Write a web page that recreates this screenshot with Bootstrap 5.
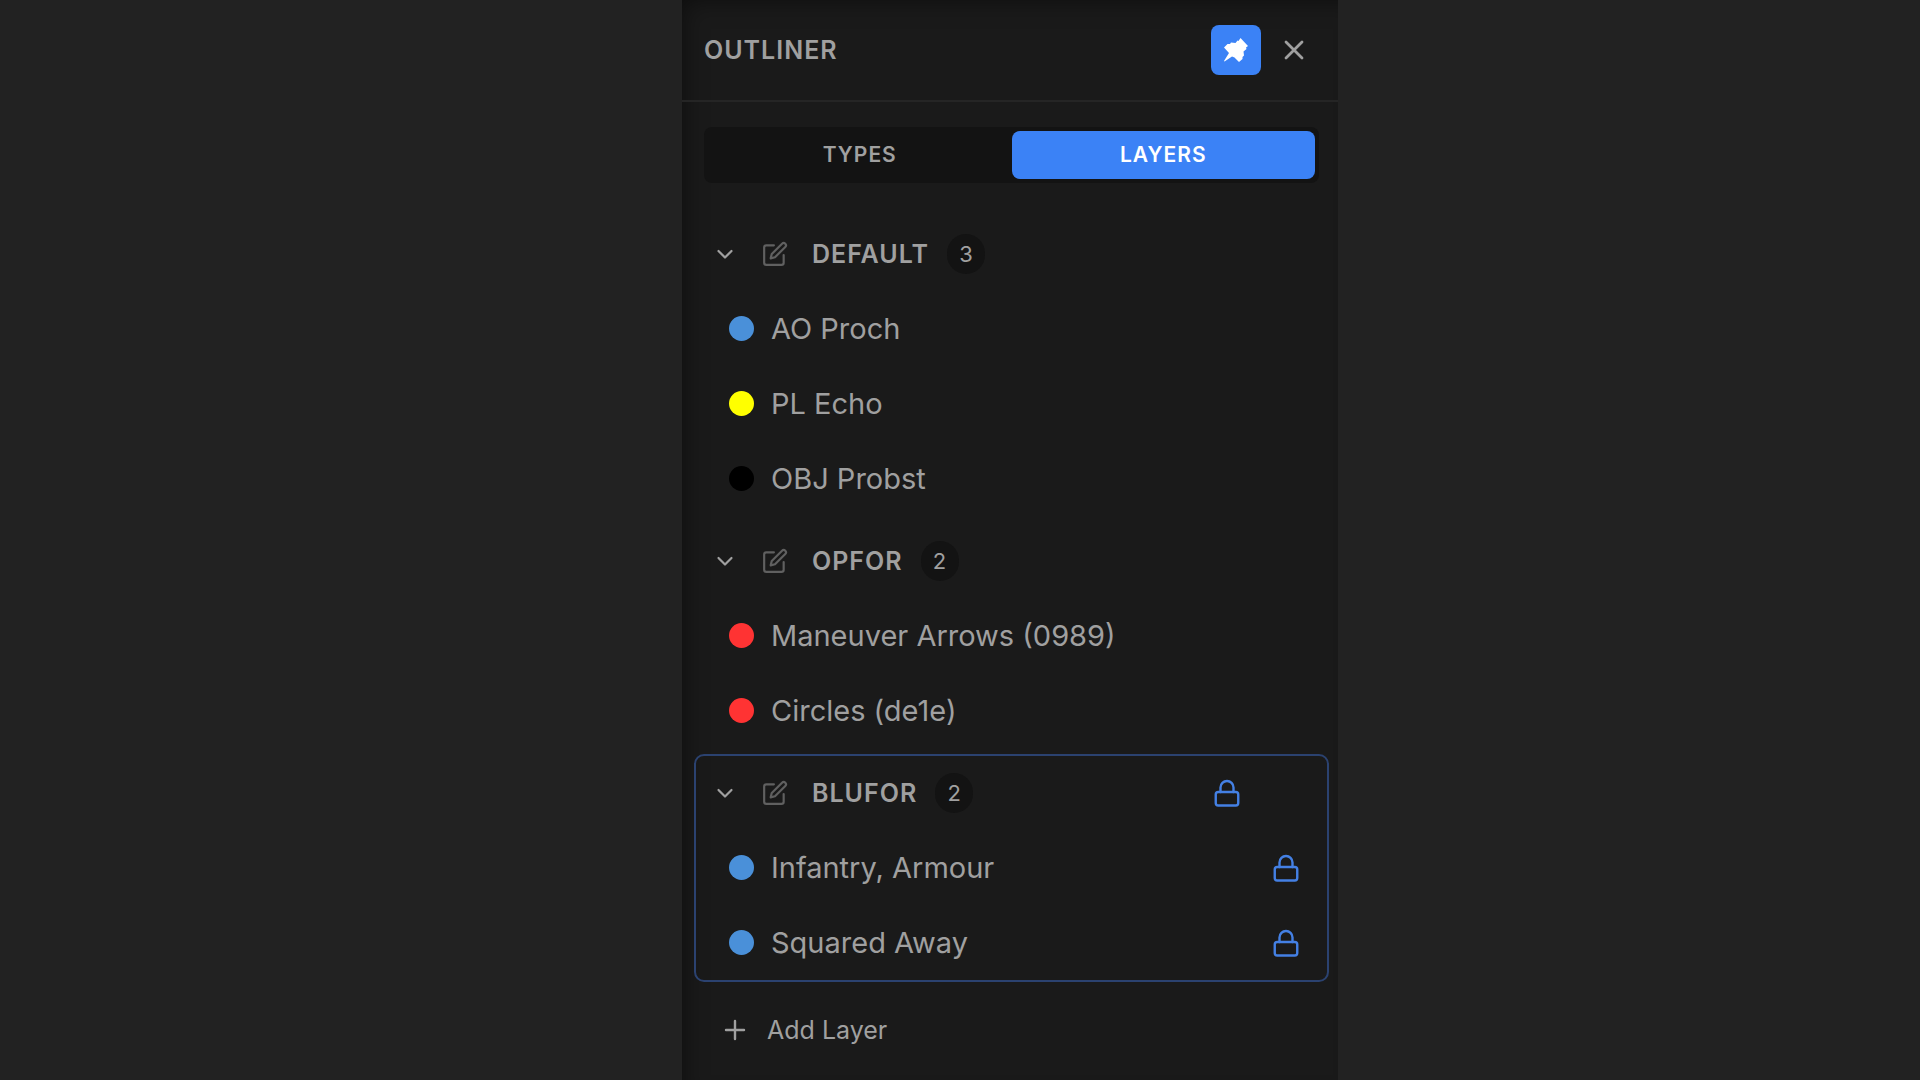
<!DOCTYPE html>
<html lang="en" data-bs-theme="dark">
<head>
<meta charset="utf-8">
<meta name="viewport" content="width=device-width, initial-scale=1">
<title>Outliner</title>
<link rel="stylesheet" href="https://cdn.jsdelivr.net/npm/bootstrap@5.3.0/dist/css/bootstrap.min.css">
<style>
  :root { --accent: #3b82f6; --panel: #1a1a1a; --well: #131313; --ink: #a0a0a0; }
  body { background: #222; color: var(--ink); font-family: Inter, "Liberation Sans", sans-serif; overflow-x: hidden; }
  .outliner {
    width: 656px; max-width: 100%; min-height: 100vh;
    margin-left: max(0px, calc(50% - 278px));
    background: var(--panel);
    box-shadow: inset 12px 12px 24px -12px rgba(0, 0, 0, .5);
  }
  .panel-head { padding: 25px 19px 25px 22px; border-bottom: 2px solid #252525; }
  .panel-title { font-size: 25px; line-height: 32px; font-weight: 600; letter-spacing: 1px; color: var(--ink); }
  .icon-btn { width: 50px; height: 50px; padding: 0; border: 0; border-radius: 8px; color: var(--ink); }
  .icon-btn.pinned { background: var(--accent); color: #fff; }
  .tab-wrap { padding: 25px 19px 32px 22px; }
  .tab-well { background: var(--well); border-radius: 8px; padding: 4px; }
  .tab-well .btn { height: 48px; padding: 0; border: 0; border-radius: 8px; font-size: 21px; line-height: 24px; font-weight: 600; letter-spacing: 1px; color: var(--ink); }
  .tab-well .btn.active { background: var(--accent); color: #fff; }
  .groups { padding: 0 9px 0 12px; }
  .layer-group { border: 2px solid transparent; border-radius: 10px; margin-bottom: 4px; }
  .layer-group.selected { border-color: #2b4270; }
  .group-head { height: 74px; padding-left: 16px; padding-right: 86px; }
  .plain-btn { padding: 0; border: 0; background: none; color: inherit; display: flex; align-items: center; justify-content: center; }
  .toggle { width: 25px; height: 40px; }
  .edit { width: 32px; height: 40px; margin-left: 22px; color: #606060; }
  .lock { width: 28px; height: 40px; color: #4480e4; }
  .group-name { font-size: 25px; line-height: 32px; font-weight: 600; letter-spacing: 1px; margin: 0 0 0 21px; color: var(--ink); }
  .count { min-width: 38px; height: 40px; margin-left: 18px; border-radius: 20px; background: var(--well); font-size: 22px; line-height: 40px; text-align: center; }
  .layer-item { height: 75px; padding-left: 33px; padding-right: 27px; font-size: 29px; line-height: 36px; }
  .dot { width: 25px; height: 25px; border-radius: 50%; margin-right: 17px; flex: none; }
  .dot-blue { background: #4a90d9; }
  .dot-yellow { background: #ff0; }
  .dot-black { background: #000; }
  .dot-red { background: #f33; }
  .add-layer { margin: 24px 0 0 37px; height: 48px; font-size: 25px; line-height: 32px; gap: 16px; }
  svg { display: block; fill: none; stroke: currentColor; stroke-linecap: round; stroke-linejoin: round; }
</style>
<script src="https://cdn.jsdelivr.net/npm/bootstrap@5.3.0/dist/js/bootstrap.bundle.min.js"></script>
</head>
<body>
<svg class="d-none" aria-hidden="true">
  <symbol id="i-chevron" viewBox="0 0 24 24"><path d="M5.500 9l6.500 6.500L18.500 9"/></symbol>
  <symbol id="i-edit" viewBox="0 0 24 24"><path d="M11 4H4a2 2 0 0 0-2 2v14a2 2 0 0 0 2 2h14a2 2 0 0 0 2-2v-7"/><path d="M18.500 2.500a2.121 2.121 0 0 1 3 3L12 15l-4 1 1-4z"/></symbol>
  <symbol id="i-lock" viewBox="0 0 28 28"><rect x="2.750" y="13" width="22.500" height="13.500" rx="2.500"/><path d="M7.500 13V8.500a6.500 6.500 0 0 1 13 0V13"/></symbol>
</svg>
<main class="outliner">
  <header class="panel-head d-flex align-items-center">
    <h1 class="panel-title m-0 me-auto">OUTLINER</h1>
    <button type="button" class="btn icon-btn pinned d-flex align-items-center justify-content-center" aria-label="Pin panel" aria-pressed="true">
      <svg width="26" height="26" viewBox="0 0 26 26"><path fill="currentColor" stroke="none" d="M17.500 1L25 9l-2 1.500.5 1.500-3 2.500.5 4-1.500 1.500v2L16 25l-4.500-4.500L9 19.500 1.500 24.500l-.5-.5 5-8L1 10.500 4.500 7H7l1-1.500 4.500.5 2-2.500 1 .5z"/></svg>
    </button>
    <button type="button" class="btn icon-btn ms-2 d-flex align-items-center justify-content-center" aria-label="Close panel">
      <svg width="20" height="20" viewBox="0 0 20 20" stroke-width="2.800"><path d="M2 2l16 16M18 2L2 18"/></svg>
    </button>
  </header>

  <div class="tab-wrap">
    <div class="tab-well d-flex" role="tablist">
      <button type="button" class="btn flex-fill w-50" role="tab" aria-selected="false">TYPES</button>
      <button type="button" class="btn flex-fill w-50 active" role="tab" aria-selected="true">LAYERS</button>
    </div>
  </div>

  <div class="groups">
    <section class="layer-group">
      <div class="group-head d-flex align-items-center">
        <button type="button" class="plain-btn toggle" aria-label="Collapse"><svg width="24" height="24" stroke-width="2.200"><use href="#i-chevron"/></svg></button>
        <button type="button" class="plain-btn edit" aria-label="Rename"><svg width="26" height="26" stroke-width="2"><use href="#i-edit"/></svg></button>
        <h2 class="group-name">DEFAULT</h2><span class="count">3</span>
      </div>
      <ul class="list-unstyled m-0">
        <li class="layer-item d-flex align-items-center"><span class="dot dot-blue"></span><span>AO Proch</span></li>
        <li class="layer-item d-flex align-items-center"><span class="dot dot-yellow"></span><span>PL Echo</span></li>
        <li class="layer-item d-flex align-items-center"><span class="dot dot-black"></span><span>OBJ Probst</span></li>
      </ul>
    </section>

    <section class="layer-group">
      <div class="group-head d-flex align-items-center">
        <button type="button" class="plain-btn toggle" aria-label="Collapse"><svg width="24" height="24" stroke-width="2.200"><use href="#i-chevron"/></svg></button>
        <button type="button" class="plain-btn edit" aria-label="Rename"><svg width="26" height="26" stroke-width="2"><use href="#i-edit"/></svg></button>
        <h2 class="group-name">OPFOR</h2><span class="count">2</span>
      </div>
      <ul class="list-unstyled m-0">
        <li class="layer-item d-flex align-items-center"><span class="dot dot-red"></span><span>Maneuver Arrows (0989)</span></li>
        <li class="layer-item d-flex align-items-center"><span class="dot dot-red"></span><span>Circles (de1e)</span></li>
      </ul>
    </section>

    <section class="layer-group selected">
      <div class="group-head d-flex align-items-center">
        <button type="button" class="plain-btn toggle" aria-label="Collapse"><svg width="24" height="24" stroke-width="2.200"><use href="#i-chevron"/></svg></button>
        <button type="button" class="plain-btn edit" aria-label="Rename"><svg width="26" height="26" stroke-width="2"><use href="#i-edit"/></svg></button>
        <h2 class="group-name">BLUFOR</h2><span class="count">2</span>
        <button type="button" class="plain-btn lock ms-auto" aria-label="Unlock layer"><svg width="28" height="28" stroke-width="2.400"><use href="#i-lock"/></svg></button>
      </div>
      <ul class="list-unstyled m-0">
        <li class="layer-item d-flex align-items-center"><span class="dot dot-blue"></span><span>Infantry, Armour</span><button type="button" class="plain-btn lock ms-auto" aria-label="Unlock item"><svg width="28" height="28" stroke-width="2.400"><use href="#i-lock"/></svg></button></li>
        <li class="layer-item d-flex align-items-center"><span class="dot dot-blue"></span><span>Squared Away</span><button type="button" class="plain-btn lock ms-auto" aria-label="Unlock item"><svg width="28" height="28" stroke-width="2.400"><use href="#i-lock"/></svg></button></li>
      </ul>
    </section>
  </div>

  <button type="button" class="plain-btn add-layer">
    <svg width="32" height="32" viewBox="0 0 32 32" stroke-width="2.400"><path d="M16 7v18M7 16h18"/></svg>
    <span>Add Layer</span>
  </button>
</main>
</body>
</html>
